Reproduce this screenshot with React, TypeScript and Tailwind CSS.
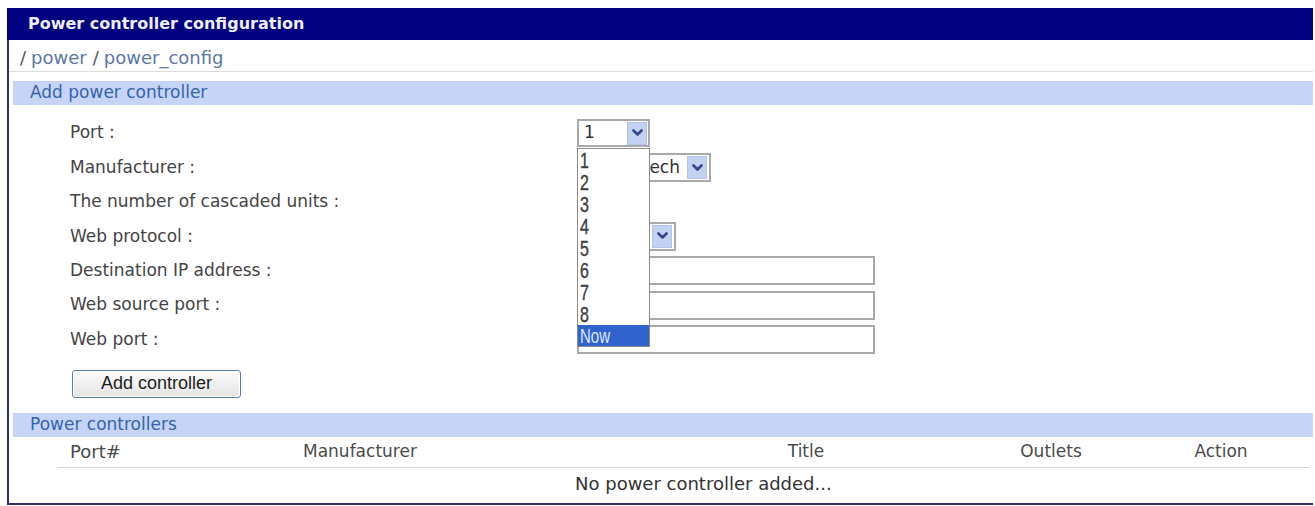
import React from "react";

const FONT = { fontFamily: '"DejaVu Sans", Verdana, sans-serif' };
const ARIAL = { fontFamily: '"Liberation Sans", Arial, sans-serif' };

function Chevron() {
  return (
    <svg width="11" height="8" viewBox="0 0 11 8" aria-hidden="true">
      <path d="M1.5 1.5 L5.5 5.5 L9.5 1.5" fill="none" stroke="#34458a" strokeWidth="2.6" strokeLinecap="round" strokeLinejoin="round" />
    </svg>
  );
}

function ArrowBox() {
  return (
    <div className="flex h-[23px] w-[20px] shrink-0 items-center justify-center border border-[#b3c4ea] bg-[#c3d2f3]">
      <Chevron />
    </div>
  );
}

function SelectBox({ width, value }: { width: string; value: string }) {
  return (
    <div className={`flex h-[29px] items-center border-2 border-[#a9a9a9] bg-white pr-[2px] ${width}`}>
      <span className="flex-1 overflow-hidden whitespace-nowrap pr-[7px] text-right text-[17px] text-[#333]">{value}</span>
      <ArrowBox />
    </div>
  );
}

function TextBox() {
  return <div className="h-[29px] w-[298px] border-2 border-[#a9a9a9] bg-white" />;
}

const ports = ["1", "2", "3", "4", "5", "6", "7", "8"];

function PortSelect() {
  return (
    <div className="relative">
      <div className="flex h-[28px] w-[73px] items-center justify-between border-2 border-[#a9a9a9] bg-white pr-[1px]">
        <span className="pl-[5px] text-[17px] text-[#333]">1</span>
        <ArrowBox />
      </div>
      {/* open option list */}
      <div className="absolute left-0 top-[29px] z-10 w-[73px] border border-[#8c8c8c] bg-white">
        {ports.map((p) => (
          <div key={p} className="flex h-[22px] items-center pl-[2px] text-[#404040]" style={ARIAL}>
            <span className="inline-block scale-y-[1.35] text-[16px] leading-[15px] [-webkit-text-stroke:0.3px_#404040]">{p}</span>
          </div>
        ))}
        <div className="flex h-[21px] items-center bg-[#3163cf] pl-[2px] text-[#dfe8ff]" style={ARIAL}>
          <span className="inline-block scale-y-[1.3] text-[15px] leading-[15px]">Now</span>
        </div>
      </div>
    </div>
  );
}

const rows: { label: string; control: React.ReactNode }[] = [
  { label: "Port :", control: <PortSelect /> },
  { label: "Manufacturer :", control: <SelectBox width="w-[134px]" value="Baytech" /> },
  { label: "The number of cascaded units :", control: <SelectBox width="w-[60px]" value="" /> },
  { label: "Web protocol :", control: <SelectBox width="w-[99px]" value="" /> },
  { label: "Destination IP address :", control: <TextBox /> },
  { label: "Web source port :", control: <TextBox /> },
  { label: "Web port :", control: <TextBox /> },
];

function SectionBar({ title }: { title: string }) {
  return (
    <div className="ml-[4px] flex h-[24px] items-center bg-[#c6d5f7] pl-[17px] text-[17px] text-[#3563ab]">
      {title}
    </div>
  );
}

export default function App() {
  return (
    <div className="h-[506px] w-[1315px] overflow-hidden bg-white pl-[7px] pt-[8px]" style={FONT}>
      <div className="w-[1306px]">
        <div className="flex h-[32px] items-center bg-[#000080] pl-[21px] text-[16px] font-bold text-[#eeeeff]">
          Power controller configuration
        </div>
        <div className="flex h-[465px] flex-col border-b-2 border-l-2 border-[#2f2f6c]">
          {/* breadcrumb */}
          <div className="flex h-[32px] items-end border-b border-[#dcdcdc] pl-[11px] text-[18px] text-[#5b78a6]">
            <span className="text-[#555]">/</span>
            <span className="ml-[5px]">power</span>
            <span className="ml-[6px] text-[#555]">/</span>
            <span className="ml-[5px]">power_config</span>
          </div>

          <div className="mt-[9px]">
            <SectionBar title="Add power controller" />
          </div>

          {/* add form */}
          <div className="mt-[11px] grid grid-cols-[507px_1fr] pl-[61px] text-[17px] text-[#444]">
            {rows.map((r) => (
              <React.Fragment key={r.label}>
                <div className="flex h-[34.4px] items-center">{r.label}</div>
                <div className="flex h-[34.4px] items-center">{r.control}</div>
              </React.Fragment>
            ))}
          </div>

          <div className="mt-[13px] pl-[63px]">
            <button
              className="flex h-[28px] w-[169px] items-center justify-center rounded-[3px] border border-[#5b7db3] bg-gradient-to-b from-[#fdfdfd] to-[#e3e3e3] text-[18px] text-[#1e1e1e] shadow-[inset_0_0_0_1px_#ffffff]"
              style={ARIAL}
            >
              Add controller
            </button>
          </div>

          <div className="mt-[15px]">
            <SectionBar title="Power controllers" />
          </div>

          {/* controller table */}
          <div className="ml-[49px] mr-[4px] text-[17px] text-[#4a4a4a]">
            <div className="grid h-[31px] grid-cols-[233px_380px_270px_220px_120px_1fr] items-end border-b border-[#d6d6d6] pb-[2px]">
              <div className="pl-[12px] text-[18px]">Port#</div>
              <div className="pl-[12px]">Manufacturer</div>
              <div className="text-center">Title</div>
              <div className="text-center">Outlets</div>
              <div className="text-center">Action</div>
              <div />
            </div>
            <div className="flex h-[32px] items-center pl-[517px] text-[18px] text-[#333]">No power controller added...</div>
          </div>
        </div>
      </div>
    </div>
  );
}
